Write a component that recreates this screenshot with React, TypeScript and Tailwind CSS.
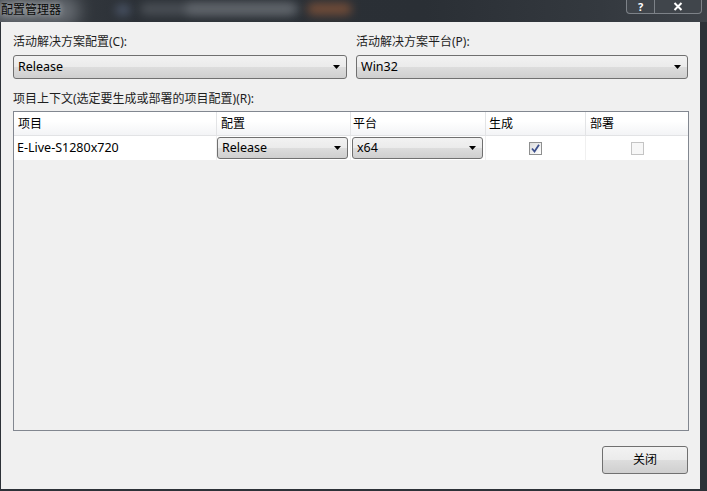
import React from "react";

const font = "font-['Noto_Sans','Noto_Sans_CJK_SC',sans-serif]";

function Arrow() {
  return (
    <svg width="7" height="4" viewBox="0 0 7 4" className="shrink-0">
      <path d="M0 0H7L3.5 4Z" fill="#000" />
    </svg>
  );
}

function Combo({ value, className = "" }: { value: string; className?: string }) {
  return (
    <div
      className={`flex items-center justify-between rounded-[3px] border border-[#707070] bg-[linear-gradient(#f2f2f2_0%,#ebebeb_50%,#dddddd_50%,#cfcfcf_100%)] pl-[4px] pr-[6px] text-[12.5px] text-black ${className}`}
    >
      <span className="leading-none">{value}</span>
      <Arrow />
    </div>
  );
}

function CheckBox({ checked, disabled }: { checked?: boolean; disabled?: boolean }) {
  return (
    <div
      className={`flex h-[13px] w-[13px] items-center justify-center border ${
        disabled
          ? "border-[#c4c4c4] bg-[#f7f7f7]"
          : "border-[#8e8f8f] bg-[linear-gradient(135deg,#dcdcdc,#ffffff)]"
      }`}
    >
      {checked && (
        <svg width="9" height="9" viewBox="0 0 9 9">
          <path d="M1 4.5L3.5 7.5L8 0.8" stroke="#3c4f8c" strokeWidth="1.8" fill="none" />
        </svg>
      )}
    </div>
  );
}

export default function App() {
  return (
    <div className={`relative flex h-[491px] w-[707px] flex-col overflow-hidden bg-[#2c3137] ${font}`}>
      {/* title bar */}
      <div className="relative h-[22px] shrink-0 overflow-hidden bg-[linear-gradient(90deg,#3a3f45_0%,#2b3036_20%,#2a2f35_60%,#34393f_85%,#3d4248_100%)]">
        <span className="absolute left-[115px] top-[4px] h-[12px] w-[16px] rounded-full bg-[#56627a] opacity-60 blur-[4px]" />
        <span className="absolute left-[140px] top-[3px] h-[12px] w-[160px] rounded-full bg-[#6a6f75] opacity-50 blur-[5px]" />
        <span className="absolute left-[185px] top-[3px] h-[12px] w-[110px] rounded-full bg-[#7a7f85] opacity-50 blur-[5px]" />
        <span className="absolute left-[307px] top-[3px] h-[12px] w-[45px] rounded-full bg-[#a3603a] opacity-60 blur-[5px]" />
        <span className="absolute left-[-10px] top-[-4px] h-[30px] w-[90px] rounded-full bg-[#7d8288] opacity-70 blur-[8px]" />
        <div className="absolute left-[1px] top-[2px] text-[12px] leading-[16px] text-[#0a0a0a] [text-shadow:0_0_6px_rgba(255,255,255,0.7)]">
          配置管理器
        </div>
        <div className="absolute right-[5px] top-0 flex">
          <div className="flex h-[14px] w-[29px] items-center justify-center rounded-bl-[4px] border border-t-0 border-[rgba(200,205,210,0.45)] bg-[#40454b] text-[11px] font-bold leading-none text-white">
            ?
          </div>
          <div className="flex h-[14px] w-[47px] items-center justify-center rounded-br-[4px] border border-l-0 border-t-0 border-[rgba(200,205,210,0.45)] bg-[#40454b]">
            <svg width="10" height="9" viewBox="0 0 10 9">
              <path d="M1.5 1L8.5 8M8.5 1L1.5 8" stroke="#fff" strokeWidth="2" />
            </svg>
          </div>
        </div>
      </div>

      {/* client */}
      <div className="ml-[1px] mr-[7px] flex h-[467px] flex-col bg-[#f0f0f0] px-[12px] pt-[12px] text-[12px] text-black">
        <div className="flex gap-[9px]">
          <div className="flex w-[335px] flex-col">
            <div className="h-[16px] leading-[16px] text-[#1e1e1e]">活动解决方案配置(C):</div>
            <Combo value="Release" className="mt-[5px] h-[24px]" />
          </div>
          <div className="flex w-[333px] flex-col">
            <div className="h-[16px] leading-[16px] text-[#1e1e1e]">活动解决方案平台(P):</div>
            <Combo value="Win32" className="mt-[5px] h-[24px]" />
          </div>
        </div>

        <div className="mt-[12px] h-[16px] leading-[16px] text-[#1e1e1e]">项目上下文(选定要生成或部署的项目配置)(R):</div>

        {/* grid */}
        <div className="mt-[4px] flex h-[320px] w-[676px] flex-col border border-[#828790] bg-[#f0f0f0]">
          <div className="flex h-[24px] border-b border-[#e2e3e5] bg-[linear-gradient(#ffffff_0%,#ffffff_40%,#f3f4f6_100%)]">
            <div className="flex w-[203px] items-center border-r border-[#e3e4e6] pl-[4px]">项目</div>
            <div className="flex w-[134px] items-center border-r border-[#e3e4e6] pl-[4px]">配置</div>
            <div className="flex w-[135px] items-center border-r border-[#e3e4e6] pl-[2px]">平台</div>
            <div className="flex w-[100px] items-center border-r border-[#e3e4e6] pl-[3px]">生成</div>
            <div className="flex flex-1 items-center pl-[4px]">部署</div>
          </div>
          <div className="flex h-[24px] bg-white">
            <div className="flex w-[203px] items-center border-r border-[#f0f0f0] pl-[3px] text-[12.5px]">E-Live-S1280x720</div>
            <div className="flex w-[134px] items-center border-r border-[#f0f0f0] py-[1px] pl-[0px] pr-[2px]">
              <Combo value="Release" className="h-[22px] w-[132px]" />
            </div>
            <div className="flex w-[135px] items-center border-r border-[#f0f0f0] py-[1px] pl-[1px] pr-[2px]">
              <Combo value="x64" className="h-[22px] w-[132px]" />
            </div>
            <div className="flex w-[100px] items-center justify-center border-r border-[#f0f0f0]">
              <CheckBox checked />
            </div>
            <div className="flex flex-1 items-center justify-center">
              <CheckBox disabled />
            </div>
          </div>
        </div>

        <div className="mt-[15px] flex justify-end">
          <div className="flex h-[28px] w-[86px] items-center justify-center rounded-[3px] border border-[#707070] bg-[linear-gradient(#f2f2f2_0%,#ebebeb_50%,#dddddd_50%,#cfcfcf_100%)] text-[12px]">
            关闭
          </div>
        </div>
      </div>
    </div>
  );
}
